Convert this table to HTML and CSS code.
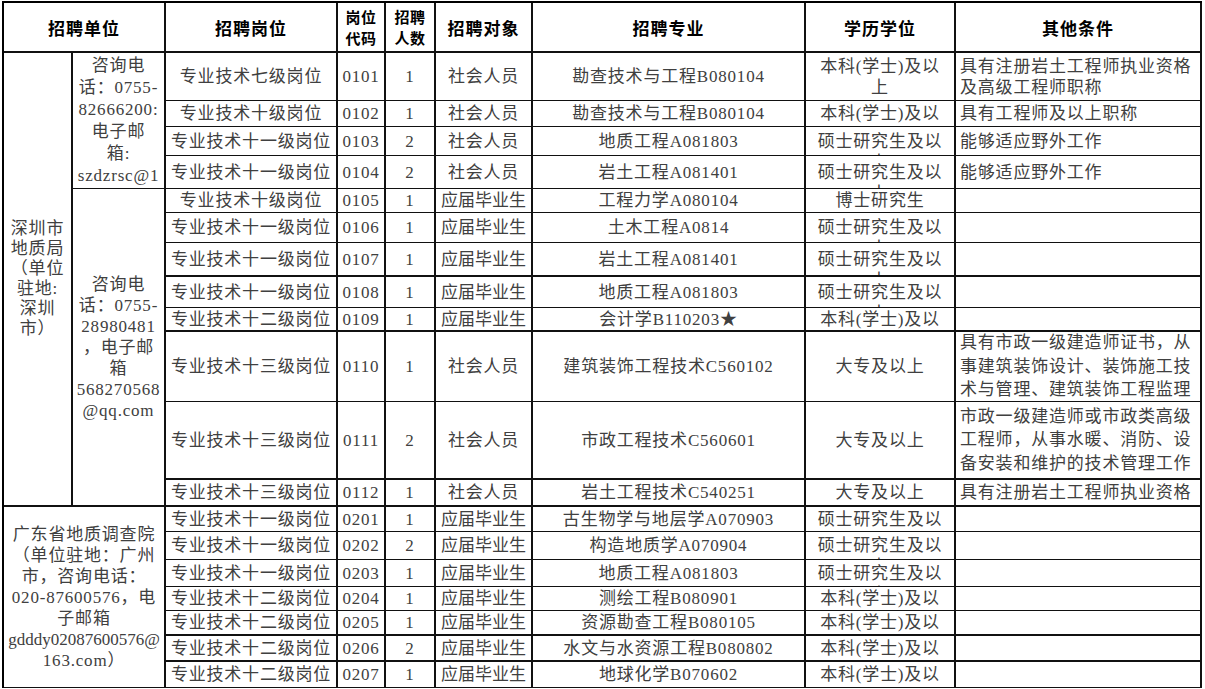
FILE: index.html
```html
<!DOCTYPE html>
<html lang="zh-CN">
<head>
<meta charset="utf-8">
<title>招聘岗位表</title>
<link rel="stylesheet" href="styles.css">
</head>
<body>
<div class="sheet">
  <div class="c h cs2 tb">招聘单位</div>
  <div class="c h tb">招聘岗位</div>
  <div class="c h hs tb"><div class="t">岗位<br>代码</div></div>
  <div class="c h hs tb"><div class="t">招聘<br>人数</div></div>
  <div class="c h tb">招聘对象</div>
  <div class="c h tb">招聘专业</div>
  <div class="c h tb">学历学位</div>
  <div class="c h tb">其他条件</div>

  <div class="c rs12 tb"><div class="t lh20">深圳市<br>地质局<br>（单位<br>驻地:<br>深圳<br>市）</div></div>
  <div class="c rs4"><div class="t lh22">咨询电<br>话：0755-<br>82666200:<br>电子邮<br>箱:<br>szdzrsc@1</div></div>
  <div class="c">专业技术七级岗位</div>
  <div class="c">0101</div>
  <div class="c">1</div>
  <div class="c">社会人员</div>
  <div class="c">勘查技术与工程B080104</div>
  <div class="c"><div class="t">本科(学士)及以<br>上</div></div>
  <div class="c l"><div class="t">具有注册岩土工程师执业资格<br>及高级工程师职称</div></div>

  <div class="c">专业技术十级岗位</div>
  <div class="c">0102</div>
  <div class="c">1</div>
  <div class="c">社会人员</div>
  <div class="c">勘查技术与工程B080104</div>
  <div class="c">本科(学士)及以</div>
  <div class="c l">具有工程师及以上职称</div>

  <div class="c">专业技术十一级岗位</div>
  <div class="c">0103</div>
  <div class="c">2</div>
  <div class="c">社会人员</div>
  <div class="c">地质工程A081803</div>
  <div class="c"><div class="t one">硕士研究生及以<br>上</div></div>
  <div class="c l">能够适应野外工作</div>

  <div class="c">专业技术十一级岗位</div>
  <div class="c">0104</div>
  <div class="c">2</div>
  <div class="c">社会人员</div>
  <div class="c">岩土工程A081401</div>
  <div class="c"><div class="t one">硕士研究生及以<br>上</div></div>
  <div class="c l">能够适应野外工作</div>

  <div class="c rs8 tb"><div class="t">咨询电<br>话：0755-<br>28980481<br>，电子邮<br>箱<br>568270568<br>@qq.com</div></div>
  <div class="c">专业技术十级岗位</div>
  <div class="c">0105</div>
  <div class="c">1</div>
  <div class="c"><span class="sq">应届毕业生</span></div>
  <div class="c">工程力学A080104</div>
  <div class="c">博士研究生</div>
  <div class="c l"></div>

  <div class="c">专业技术十一级岗位</div>
  <div class="c">0106</div>
  <div class="c">1</div>
  <div class="c"><span class="sq">应届毕业生</span></div>
  <div class="c">土木工程A0814</div>
  <div class="c"><div class="t one">硕士研究生及以<br>上</div></div>
  <div class="c l"></div>

  <div class="c tb">专业技术十一级岗位</div>
  <div class="c tb">0107</div>
  <div class="c tb">1</div>
  <div class="c tb"><span class="sq">应届毕业生</span></div>
  <div class="c tb">岩土工程A081401</div>
  <div class="c tb"><div class="t one">硕士研究生及以<br>上</div></div>
  <div class="c l tb"></div>

  <div class="c">专业技术十一级岗位</div>
  <div class="c">0108</div>
  <div class="c">1</div>
  <div class="c"><span class="sq">应届毕业生</span></div>
  <div class="c">地质工程A081803</div>
  <div class="c"><div class="t one">硕士研究生及以<br>上</div></div>
  <div class="c l"></div>

  <div class="c tb">专业技术十二级岗位</div>
  <div class="c tb">0109</div>
  <div class="c tb">1</div>
  <div class="c tb"><span class="sq">应届毕业生</span></div>
  <div class="c tb">会计学B110203★</div>
  <div class="c tb">本科(学士)及以</div>
  <div class="c l tb"></div>

  <div class="c">专业技术十三级岗位</div>
  <div class="c">0110</div>
  <div class="c">1</div>
  <div class="c">社会人员</div>
  <div class="c">建筑装饰工程技术C560102</div>
  <div class="c">大专及以上</div>
  <div class="c l"><div class="t lh23">具有市政一级建造师证书，从<br>事建筑装饰设计、装饰施工技<br>术与管理、建筑装饰工程监理</div></div>

  <div class="c tb">专业技术十三级岗位</div>
  <div class="c tb">0111</div>
  <div class="c tb">2</div>
  <div class="c tb">社会人员</div>
  <div class="c tb">市政工程技术C560601</div>
  <div class="c tb">大专及以上</div>
  <div class="c l tb"><div class="t lh23">市政一级建造师或市政类高级<br>工程师，从事水暖、消防、设<br>备安装和维护的技术管理工作</div></div>

  <div class="c tb">专业技术十三级岗位</div>
  <div class="c tb">0112</div>
  <div class="c tb">1</div>
  <div class="c tb">社会人员</div>
  <div class="c tb">岩土工程技术C540251</div>
  <div class="c tb">大专及以上</div>
  <div class="c l tb">具有注册岩土工程师执业资格</div>

  <div class="c cs2 rs7"><div class="t">广东省地质调查院<br>（单位驻地：广州<br>市，咨询电话：<br>020-87600576，电<br>子邮箱<br><span class="nar">gdddy02087600576@</span><br>163.com）</div></div>
  <div class="c">专业技术十一级岗位</div>
  <div class="c">0201</div>
  <div class="c">1</div>
  <div class="c"><span class="sq">应届毕业生</span></div>
  <div class="c">古生物学与地层学A070903</div>
  <div class="c"><div class="t one">硕士研究生及以<br>上</div></div>
  <div class="c l"></div>

  <div class="c">专业技术十一级岗位</div>
  <div class="c">0202</div>
  <div class="c">2</div>
  <div class="c"><span class="sq">应届毕业生</span></div>
  <div class="c">构造地质学A070904</div>
  <div class="c"><div class="t one">硕士研究生及以<br>上</div></div>
  <div class="c l"></div>

  <div class="c">专业技术十一级岗位</div>
  <div class="c">0203</div>
  <div class="c">1</div>
  <div class="c"><span class="sq">应届毕业生</span></div>
  <div class="c">地质工程A081803</div>
  <div class="c"><div class="t one">硕士研究生及以<br>上</div></div>
  <div class="c l"></div>

  <div class="c">专业技术十二级岗位</div>
  <div class="c">0204</div>
  <div class="c">1</div>
  <div class="c"><span class="sq">应届毕业生</span></div>
  <div class="c">测绘工程B080901</div>
  <div class="c">本科(学士)及以</div>
  <div class="c l"></div>

  <div class="c tb">专业技术十二级岗位</div>
  <div class="c tb">0205</div>
  <div class="c tb">1</div>
  <div class="c tb"><span class="sq">应届毕业生</span></div>
  <div class="c tb">资源勘查工程B080105</div>
  <div class="c tb">本科(学士)及以</div>
  <div class="c l tb"></div>

  <div class="c tb">专业技术十二级岗位</div>
  <div class="c tb">0206</div>
  <div class="c tb">2</div>
  <div class="c tb"><span class="sq">应届毕业生</span></div>
  <div class="c tb">水文与水资源工程B080802</div>
  <div class="c tb">本科(学士)及以</div>
  <div class="c l tb"></div>

  <div class="c">专业技术十二级岗位</div>
  <div class="c">0207</div>
  <div class="c">1</div>
  <div class="c"><span class="sq">应届毕业生</span></div>
  <div class="c">地球化学B070602</div>
  <div class="c">本科(学士)及以</div>
  <div class="c l"></div>
</div>
</body>
</html>
```

FILE: styles.css
```css
html, body {
  margin: 0;
  padding: 0;
  background: #ffffff;
}

body {
  font-family: "Liberation Serif", "Noto Sans CJK SC", serif;
  font-size: 17px;
  letter-spacing: 0.8px;
  color: #404040;
}

.sheet {
  display: grid;
  grid-template-columns: 69px 93px 172px 48px 50px 97px 273px 150px 246px;
  grid-template-rows: 50px 48px 26px 29px 33px 24px 30px 34px 31px 24px 70px 78px 27px 25px 28px 27px 24px 25px 26px 26px;
  width: max-content;
  margin: 1px 0 0 2px;
  border-top: 2px solid #000;
  border-left: 2px solid #000;
}

.c {
  box-sizing: border-box;
  border-right: 2px solid #111;
  border-bottom: 1px solid #111;
  display: flex;
  align-items: center;
  justify-content: center;
  text-align: center;
  overflow: hidden;
  white-space: nowrap;
  line-height: 21px;
}

.tb {
  border-bottom-width: 2px;
}

.cs2 {
  grid-column: span 2;
}

.rs4 {
  grid-row: span 4;
}

.rs7 {
  grid-row: span 7;
}

.rs8 {
  grid-row: span 8;
}

.rs12 {
  grid-row: span 12;
}

.h {
  color: #000;
  font-family: "Noto Sans CJK SC", sans-serif;
  font-weight: 700;
  font-size: 17px;
  letter-spacing: 1px;
}

.hs {
  font-size: 15px;
  letter-spacing: 0.5px;
}

.l {
  justify-content: flex-start;
  text-align: left;
  padding-left: 4px;
}

.t {
  line-height: 21px;
}

.one {
  height: 21px;
}

.lh20 {
  line-height: 20px;
}

.lh22 {
  line-height: 22px;
}

.lh23 {
  line-height: 23.5px;
}

.sq {
  letter-spacing: 0;
}

.nar {
  letter-spacing: 0;
}
```
